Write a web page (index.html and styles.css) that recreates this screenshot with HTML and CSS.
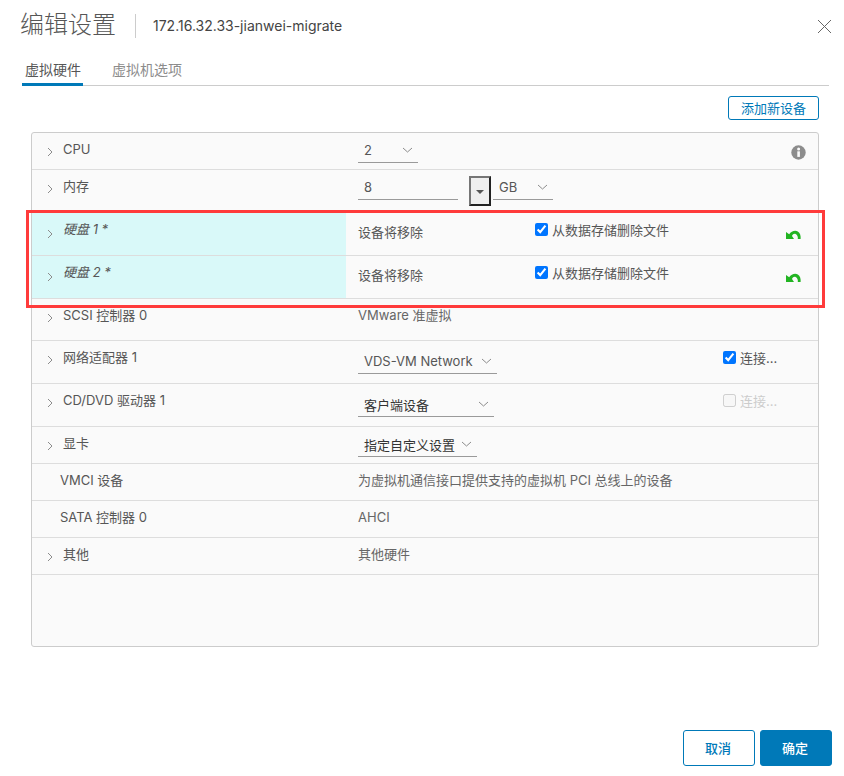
FILE: index.html
```html
<!DOCTYPE html>
<html lang="zh">
<head>
  <meta charset="UTF-8" />
  <title>编辑设置</title>
  <link rel="stylesheet" href="styles.css">
</head>
<body>
  <div class="dialog">
    <div class="header">
      <h1>编辑设置</h1>
      <div class="subtitle">172.16.32.33-jianwei-migrate</div>
      <svg class="close" viewBox="0 0 15 15"><path d="M1 1 L14 14 M14 1 L1 14" /></svg>
    </div>

    <div class="tabs">
      <div class="tab active">虚拟硬件</div>
      <div class="tab">虚拟机选项</div>
    </div>

    <div class="toolbar">
      <button type="button" class="btn-small">添加新设备</button>
    </div>

    <div class="panel">
      <div class="row h37">
        <div class="name"><svg class="arrow" viewBox="0 0 6 10"><path d="M1 1 L5 5 L1 9" /></svg>CPU</div>
        <div class="value">
          <div class="select w60">2<svg class="caret" viewBox="0 0 11 6"><path d="M1 1 L5.5 5 L10 1" /></svg></div>
          <svg class="info" viewBox="0 0 15 15"><circle cx="7.5" cy="7.5" r="7.2" /><rect x="6.3" y="6.3" width="2.6" height="5.6" /><circle class="dot" cx="7.6" cy="4" r="1.5" /></svg>
        </div>
      </div>

      <div class="row h43">
        <div class="name"><svg class="arrow" viewBox="0 0 6 10"><path d="M1 1 L5 5 L1 9" /></svg>内存</div>
        <div class="value">
          <div class="select w100">8</div>
          <div class="spin"><span class="spin-tri"></span></div>
          <div class="select w60">GB<svg class="caret" viewBox="0 0 11 6"><path d="M1 1 L5.5 5 L10 1" /></svg></div>
        </div>
      </div>

      <div class="row h43 removed">
        <div class="name"><svg class="arrow" viewBox="0 0 6 10"><path d="M1 1 L5 5 L1 9" /></svg><em>硬盘 1 *</em></div>
        <div class="value">
          <div class="status">设备将移除</div>
          <label class="check"><input type="checkbox" checked />从数据存储删除文件</label>
          <svg class="undo" viewBox="0 0 15 12"><path d="M0 4 L3.2 6.2 C5 3.4 9 1.6 11.8 3.4 C14 4.8 15 7.6 14.6 11 L11.8 11 C12.2 8.8 11.2 6.6 9.6 6 C8 5.4 6.8 6.4 6 8 L8 11 L0 11 Z" /></svg>
        </div>
      </div>

      <div class="row h43 removed">
        <div class="name"><svg class="arrow" viewBox="0 0 6 10"><path d="M1 1 L5 5 L1 9" /></svg><em>硬盘 2 *</em></div>
        <div class="value">
          <div class="status">设备将移除</div>
          <label class="check"><input type="checkbox" checked />从数据存储删除文件</label>
          <svg class="undo" viewBox="0 0 15 12"><path d="M0 4 L3.2 6.2 C5 3.4 9 1.6 11.8 3.4 C14 4.8 15 7.6 14.6 11 L11.8 11 C12.2 8.8 11.2 6.6 9.6 6 C8 5.4 6.8 6.4 6 8 L8 11 L0 11 Z" /></svg>
        </div>
      </div>

      <div class="row h42">
        <div class="name"><svg class="arrow" viewBox="0 0 6 10"><path d="M1 1 L5 5 L1 9" /></svg>SCSI 控制器 0</div>
        <div class="value"><div class="plain">VMware 准虚拟</div></div>
      </div>

      <div class="row h43">
        <div class="name"><svg class="arrow" viewBox="0 0 6 10"><path d="M1 1 L5 5 L1 9" /></svg>网络适配器 1</div>
        <div class="value">
          <div class="select w139 low">VDS-VM Network<svg class="caret" viewBox="0 0 11 6"><path d="M1 1 L5.5 5 L10 1" /></svg></div>
          <label class="check conn"><input type="checkbox" checked />连接...</label>
        </div>
      </div>

      <div class="row h43">
        <div class="name"><svg class="arrow" viewBox="0 0 6 10"><path d="M1 1 L5 5 L1 9" /></svg>CD/DVD 驱动器 1</div>
        <div class="value">
          <div class="select w136 low dark">客户端设备<svg class="caret" viewBox="0 0 11 6"><path d="M1 1 L5.5 5 L10 1" /></svg></div>
          <label class="check conn off"><input type="checkbox" disabled />连接...</label>
        </div>
      </div>

      <div class="row h37">
        <div class="name"><svg class="arrow" viewBox="0 0 6 10"><path d="M1 1 L5 5 L1 9" /></svg>显卡</div>
        <div class="value"><div class="select w119 dark">指定自定义设置<svg class="caret" viewBox="0 0 11 6"><path d="M1 1 L5.5 5 L10 1" /></svg></div></div>
      </div>

      <div class="row h37">
        <div class="name flat">VMCI 设备</div>
        <div class="value"><div class="plain">为虚拟机通信接口提供支持的虚拟机 PCI 总线上的设备</div></div>
      </div>

      <div class="row h37">
        <div class="name flat">SATA 控制器 0</div>
        <div class="value"><div class="plain">AHCI</div></div>
      </div>

      <div class="row h37">
        <div class="name"><svg class="arrow" viewBox="0 0 6 10"><path d="M1 1 L5 5 L1 9" /></svg>其他</div>
        <div class="value"><div class="plain">其他硬件</div></div>
      </div>
    </div>

    <div class="footer">
      <button type="button" class="btn cancel">取消</button>
      <button type="button" class="btn ok">确定</button>
    </div>

    <!-- 截图上的红框标注 -->
    <div class="mark"></div>
  </div>
</body>
</html>
```

FILE: styles.css
```css
* {
  box-sizing: border-box;
}

html, body {
  margin: 0;
  height: 776px;
  overflow: hidden;
  background: #fff;
}

body {
  font-family: Inter, "Noto Sans CJK SC", sans-serif;
  font-size: 13px;
  color: #565656;
}

.dialog {
  position: relative;
  height: 776px;
  padding: 12px 12px 10px 21px;
}

.header {
  display: flex;
  align-items: center;
  height: 28px;
}

h1 {
  margin: 0 0 0 -1px;
  padding-right: 19px;
  border-right: 1px solid #ccc;
  font-size: 24px;
  font-weight: 300;
  line-height: 22px;
  height: 24px;
}

.subtitle {
  margin-left: 17px;
  padding-bottom: 2px;
  font-size: 14px;
  color: #444;
}

.close {
  margin-left: auto;
  width: 15px;
  height: 15px;
  fill: none;
  stroke: #666;
  stroke-width: 1;
}

.tabs {
  display: flex;
  margin: 20px 3px 0 1px;
  height: 26px;
  border-bottom: 1px solid #ccc;
}

.tab {
  margin-right: 26px;
  padding: 0 2px 0 3px;
  height: 26px;
  font-size: 14px;
  line-height: 20px;
  color: #8c8c8c;
}

.tab.active {
  color: #565656;
  border-bottom: 3px solid #0079b8;
}

.toolbar {
  display: flex;
  justify-content: flex-end;
  margin: 10px 13px 12px 0;
}

.btn-small {
  width: 91px;
  height: 24px;
  padding: 0 0 2px;
  background: #fff;
  border: 1px solid #0079b8;
  border-radius: 3px;
  color: #0079b8;
  font: inherit;
}

.panel {
  margin: 0 13px 0 10px;
  height: 515px;
  background: #fafafa;
  border: 1px solid #ccc;
  border-radius: 3px;
}

.row {
  display: grid;
  grid-template-columns: 314px 1fr;
  border-bottom: 1px solid #ddd;
}

.h37 { height: 37px; }
.h42 { height: 42px; }
.h43 { height: 43px; }

.removed .name {
  background: #d9f9f9;
}

.name {
  display: flex;
  align-items: flex-start;
  padding: 7px 0 0 15px;
  line-height: 18px;
}

.name.flat {
  padding-left: 28px;
}

.arrow {
  flex: none;
  width: 6px;
  height: 10px;
  margin: 7px 10px 0 0;
  fill: none;
  stroke: #8c8c8c;
  stroke-width: 1;
}

.removed .arrow {
  margin-top: 9px;
}

.value {
  display: flex;
  align-items: flex-start;
  padding: 0 12px;
  min-width: 0;
}

.plain {
  padding-top: 7px;
  line-height: 18px;
  color: #666;
  white-space: nowrap;
}

.status {
  width: 177px;
  padding-top: 10px;
  line-height: 18px;
}

.select {
  display: flex;
  align-items: center;
  justify-content: space-between;
  height: 25px;
  margin-top: 5px;
  padding: 0 5px 0 6px;
  border-bottom: 1px solid #9a9a9a;
  color: #565656;
  white-space: nowrap;
}

.select.low {
  margin-top: 8px;
}

.select.dark {
  color: #333;
}

.w60 { width: 60px; }
.w100 { width: 100px; }
.w119 { width: 119px; }
.w136 { width: 136px; }
.w139 { width: 139px; }

.caret {
  flex: none;
  width: 11px;
  height: 6px;
  fill: none;
  stroke: #8c8c8c;
  stroke-width: 1;
}

.spin {
  display: flex;
  align-items: center;
  justify-content: center;
  width: 22px;
  height: 30px;
  margin: 6px 2px 0 11px;
  background: #efefef;
  border: 2px solid;
  border-color: #767676 #222 #222 #767676;
}

.spin-tri {
  width: 0;
  height: 0;
  margin-top: 2px;
  border-left: 4px solid transparent;
  border-right: 4px solid transparent;
  border-top: 4px solid #555;
}

.info {
  margin: 12px 0 0 auto;
  width: 15px;
  height: 15px;
  fill: #8c8c8c;
}

.info rect, .info .dot {
  fill: #fafafa;
}

.check {
  display: flex;
  align-items: flex-start;
  padding-top: 8px;
  line-height: 18px;
  white-space: nowrap;
}

.check input {
  flex: none;
  width: 13px;
  height: 13px;
  margin: 2px 4px 0 0;
}

.conn {
  margin-left: auto;
  margin-right: 30px;
  width: 53px;
}

.conn.off {
  color: #ccc;
}

.undo {
  flex: none;
  width: 15px;
  height: 12px;
  margin: 15px 5px 0 auto;
  fill: #22b422;
}

.footer {
  display: flex;
  justify-content: flex-end;
  gap: 5px;
  margin-top: 83px;
}

.btn {
  width: 72px;
  height: 36px;
  padding: 0 2px 2px 0;
  border: 1px solid #0079b8;
  border-radius: 3px;
  font: inherit;
  font-weight: 500;
}

.cancel {
  background: #fff;
  color: #0079b8;
}

.ok {
  background: #0079b8;
  color: #fff;
}

.mark {
  position: absolute;
  left: 26px;
  top: 210px;
  width: 799px;
  height: 98px;
  border: 3px solid #ff3b3b;
}
```
